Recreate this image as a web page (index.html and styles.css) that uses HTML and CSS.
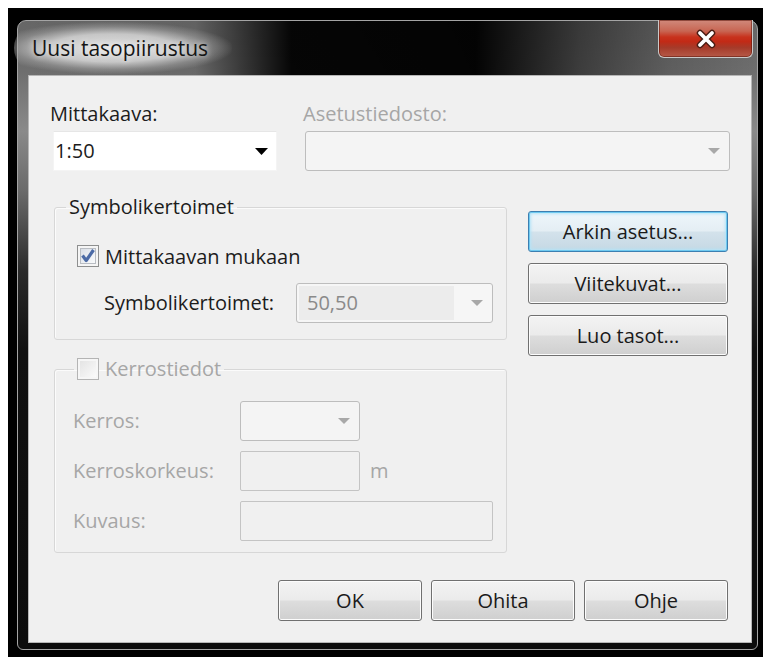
FILE: index.html
```html
<!DOCTYPE html>
<html lang="fi">
<head>
<meta charset="utf-8">
<title>Uusi tasopiirustus</title>
<link rel="stylesheet" href="styles.css">
</head>
<body>
<div class="desk">
  <div class="window">
    <div class="titlebar">
      <span class="title">Uusi tasopiirustus</span>
      <button class="close" type="button" aria-label="Sulje">
        <svg width="22" height="20" viewBox="0 0 22 20">
          <path d="M5 4 L17 16 M17 4 L5 16" stroke="#4a1d14" stroke-width="6.5" stroke-linecap="round" fill="none"/>
          <path d="M5 4 L17 16 M17 4 L5 16" stroke="#ffffff" stroke-width="3.8" stroke-linecap="round" fill="none"/>
        </svg>
      </button>
    </div>

    <div class="client">
      <div class="top-row">
        <div class="field">
          <span class="lbl lbl-scale">Mittakaava:</span>
          <div class="combo combo-white">
            <span class="value">1:50</span>
            <svg class="arr" width="13" height="7" viewBox="0 0 13 7"><path d="M0 0H13L6.5 7Z" fill="#000"/></svg>
          </div>
        </div>
        <div class="field">
          <span class="lbl lbl-settings disabled">Asetustiedosto:</span>
          <div class="combo combo-off">
            <span class="value"></span>
            <svg class="arr-off" width="12" height="6" viewBox="0 0 12 6"><path d="M0 0H12L6 6Z" fill="#a8a8a8"/></svg>
          </div>
        </div>
      </div>

      <div class="middle">
        <div class="groups">
          <fieldset class="group group-symbols">
            <legend class="legend-text">Symbolikertoimet</legend>
            <div class="group-body symbols-body">
              <div class="check-row">
                <svg class="check" width="22" height="22" viewBox="0 0 22 22">
                  <defs>
                    <linearGradient id="chk-on" x1="0" y1="0" x2="1" y2="1">
                      <stop offset="0" stop-color="#d9dee6"/>
                      <stop offset="1" stop-color="#fbfcfd"/>
                    </linearGradient>
                  </defs>
                  <rect x="0.5" y="0.5" width="21" height="21" fill="#f5f5f5" stroke="#8e8f8f"/>
                  <rect x="3.5" y="3.5" width="15" height="15" fill="url(#chk-on)" stroke="#b9bdc3"/>
                  <path d="M5.5 10.5 L9.2 15.5 L16.5 5" fill="none" stroke="#4b6aa6" stroke-width="3.2" stroke-linejoin="round"/>
                </svg>
                <span>Mittakaavan mukaan</span>
              </div>
              <div class="factor-row">
                <span class="lbl factor-lbl">Symbolikertoimet:</span>
                <div class="combo combo-off factor">
                  <span class="value value-off">50,50</span>
                  <svg class="arr-off" width="12" height="6" viewBox="0 0 12 6"><path d="M0 0H12L6 6Z" fill="#a8a8a8"/></svg>
                </div>
              </div>
            </div>
          </fieldset>

          <fieldset class="group group-floor">
            <legend class="legend-check">
              <svg class="check" width="22" height="22" viewBox="0 0 22 22">
                <defs>
                  <linearGradient id="chk-off" x1="0" y1="0" x2="1" y2="1">
                    <stop offset="0" stop-color="#e4e4e4"/>
                    <stop offset="1" stop-color="#fafafa"/>
                  </linearGradient>
                </defs>
                <rect x="0.5" y="0.5" width="21" height="21" fill="#f6f6f6" stroke="#b4b4b4"/>
                <rect x="3" y="3" width="16" height="16" fill="url(#chk-off)"/>
              </svg>
              <span class="disabled">Kerrostiedot</span>
            </legend>
            <div class="group-body floor-body">
              <span class="lbl disabled">Kerros:</span>
              <div class="combo combo-off small">
                <span class="value"></span>
                <svg class="arr-off" width="12" height="6" viewBox="0 0 12 6"><path d="M0 0H12L6 6Z" fill="#a8a8a8"/></svg>
              </div>
              <span></span>

              <span class="lbl disabled">Kerroskorkeus:</span>
              <div class="textbox small"></div>
              <span class="unit disabled">m</span>

              <span class="lbl disabled">Kuvaus:</span>
              <div class="textbox wide"></div>
            </div>
          </fieldset>
        </div>

        <div class="side-buttons">
          <button class="btn btn-default" type="button">Arkin asetus...</button>
          <button class="btn" type="button">Viitekuvat...</button>
          <button class="btn" type="button">Luo tasot...</button>
        </div>
      </div>

      <div class="footer">
        <button class="btn btn-foot" type="button">OK</button>
        <button class="btn btn-foot" type="button">Ohita</button>
        <button class="btn btn-foot" type="button">Ohje</button>
      </div>
    </div>
  </div>
</div>
</body>
</html>
```

FILE: styles.css
```css
* {
  box-sizing: border-box;
}

body {
  margin: 0;
  background: #ffffff;
  font-family: "Open Sans", "Noto Sans", "DejaVu Sans", sans-serif;
  font-size: 20px;
  color: #1c1c1c;
}

/* dark desktop behind the dialog */
.desk {
  margin: 8px 0 0 8px;
  width: 755px;
  height: 649px;
  background: #000000;
  padding: 12px 0 0 9px;
  overflow: hidden;
}

/* glass frame */
.window {
  width: 741px;
  height: 630px;
  border: 1px solid #a4a4a4;
  border-radius: 9px 9px 6px 6px;
  padding: 0 5px 6px 10px;
  display: flex;
  flex-direction: column;
  background:
    linear-gradient(to right,
      rgba(0, 0, 0, 0) 0%,
      rgba(0, 0, 0, 0.05) 24%,
      rgba(0, 0, 0, 0.95) 37%,
      rgba(0, 0, 0, 0.97) 62%,
      rgba(0, 0, 0, 0.45) 76%,
      rgba(0, 0, 0, 0.15) 88%,
      rgba(0, 0, 0, 0) 100%) top left / 100% 54px no-repeat,
    linear-gradient(to bottom,
      #666666 0px,
      #6e6e6e 50px,
      #8a8a8a 110px,
      #6a6a6a 170px,
      #2a2a2a 250px,
      #101010 330px,
      #0c0c0c 100%);
}

.titlebar {
  height: 54px;
  display: flex;
  align-items: flex-start;
}

/* caption text with the soft light halo behind it */
.title {
  position: relative;
  z-index: 0;
  margin: 13px 0 0 4px;
  font-size: 21px;
  line-height: 28px;
  color: #151515;
  text-shadow: 0 0 6px rgba(255, 255, 255, 0.9);
}

.title::before {
  content: "";
  position: absolute;
  z-index: -1;
  left: -18px;
  right: -24px;
  top: -12px;
  bottom: -12px;
  border-radius: 30px;
  background: radial-gradient(ellipse at 45% 50%,
    rgba(232, 232, 232, 0.95) 0%,
    rgba(215, 215, 215, 0.85) 38%,
    rgba(170, 170, 170, 0.45) 58%,
    rgba(120, 120, 120, 0) 72%);
}

.close {
  margin: -1px -1px 0 auto;
  width: 95px;
  height: 38px;
  padding: 0;
  border: 1px solid #c9c9c9;
  border-top: 0;
  border-radius: 0 0 6px 6px;
  box-shadow: inset 0 0 0 1px rgba(90, 20, 10, 0.55);
  background: linear-gradient(to bottom,
    #d08a7c 0%,
    #c86552 30%,
    #c8321d 46%,
    #c22a16 58%,
    #a63a29 74%,
    #b55a48 100%);
  display: flex;
  align-items: center;
  justify-content: center;
}

/* dialog body */
.client {
  height: 568px;
  border: 1px solid #b6b6b6;
  background: #f0f0f0;
  padding: 26px 21px 0 24px;
}

.lbl {
  display: block;
  line-height: 24px;
  white-space: nowrap;
}

.disabled {
  color: #a6a6a6;
}

.top-row {
  display: grid;
  grid-template-columns: 224px 425px;
  column-gap: 28px;
}

.lbl-scale {
  margin-left: -3px;
}

.lbl-settings {
  margin-left: -2px;
}

.combo {
  display: flex;
  align-items: center;
  justify-content: space-between;
  height: 40px;
  margin-top: 5px;
}

.combo-white {
  background: #ffffff;
  border: 1px solid #f4f4f4;
  border-top-color: #e6e6e6;
  padding: 0 8px 0 1px;
}

.combo-off {
  background: #f4f4f4;
  border: 1px solid #bdbdbd;
  border-radius: 3px;
  padding: 0 9px 0 8px;
}

.value {
  line-height: 24px;
}

.value-off {
  color: #8a8a8a;
}

.middle {
  display: flex;
  gap: 21px;
  margin-top: 24px;
  margin-left: 1px;
}

.groups {
  width: 453px;
  display: flex;
  flex-direction: column;
}

.group {
  margin: 0;
  padding: 0;
  min-width: 0;
  border: 1px solid #d7d7d7;
  border-radius: 3px;
  box-shadow: inset 1px 1px 0 #fbfbfb;
}

.legend-text {
  margin-left: 11px;
  padding: 0 3px;
  line-height: 24px;
}

.legend-check {
  margin-left: 19px;
  padding: 0 3px;
  line-height: 24px;
  display: flex;
  align-items: center;
  gap: 6px;
}

.check {
  display: block;
  flex: none;
}

.symbols-body {
  padding: 26px 12px 16px 22px;
}

.check-row {
  display: flex;
  align-items: center;
  gap: 6px;
  height: 22px;
}

.factor-row {
  display: flex;
  align-items: center;
  margin-top: 16px;
  margin-left: 27px;
}

.factor-lbl {
  width: 192px;
}

.factor {
  width: 197px;
  margin-top: 0;
  padding-left: 10px;
  background:
    linear-gradient(#ececec, #ececec) 2px 2px / 155px 34px no-repeat,
    #f6f6f6;
}

.group-floor {
  margin-top: 17px;
}

.floor-body {
  display: grid;
  grid-template-columns: 167px 120px auto;
  grid-auto-rows: 40px;
  row-gap: 10px;
  align-items: center;
  padding: 20px 12px 11px 18px;
}

.floor-body .combo {
  margin-top: 0;
  height: 40px;
}

.textbox {
  height: 40px;
  background: #f0f0f0;
  border: 1px solid #c4c4c4;
  border-radius: 2px;
}

.wide {
  grid-column: 2 / span 2;
  width: 253px;
}

.unit {
  padding-left: 10px;
  line-height: 24px;
}

.side-buttons {
  width: 200px;
  margin-top: 16px;
  display: flex;
  flex-direction: column;
  gap: 11px;
}

.btn {
  height: 41px;
  padding: 0;
  font: inherit;
  color: #1a1a1a;
  border: 1px solid #707070;
  border-radius: 3px;
  background: linear-gradient(to bottom,
    #f3f3f3 0%,
    #ebebeb 48%,
    #dddddd 52%,
    #cfcfcf 100%);
  box-shadow: inset 0 0 0 1px #fcfcfc;
}

.btn-default {
  border-color: #3c7fb1;
  background: linear-gradient(to bottom,
    #eef6fb 0%,
    #e4eef4 48%,
    #d3e2eb 52%,
    #c5d8e4 100%);
  box-shadow: inset 0 0 0 1px #6ec9f0, inset 0 0 3px 2px #b4e3f7;
}

.footer {
  display: flex;
  justify-content: flex-end;
  gap: 9px;
  margin-top: 27px;
  padding-right: 2px;
}

.btn-foot {
  width: 144px;
}
```
